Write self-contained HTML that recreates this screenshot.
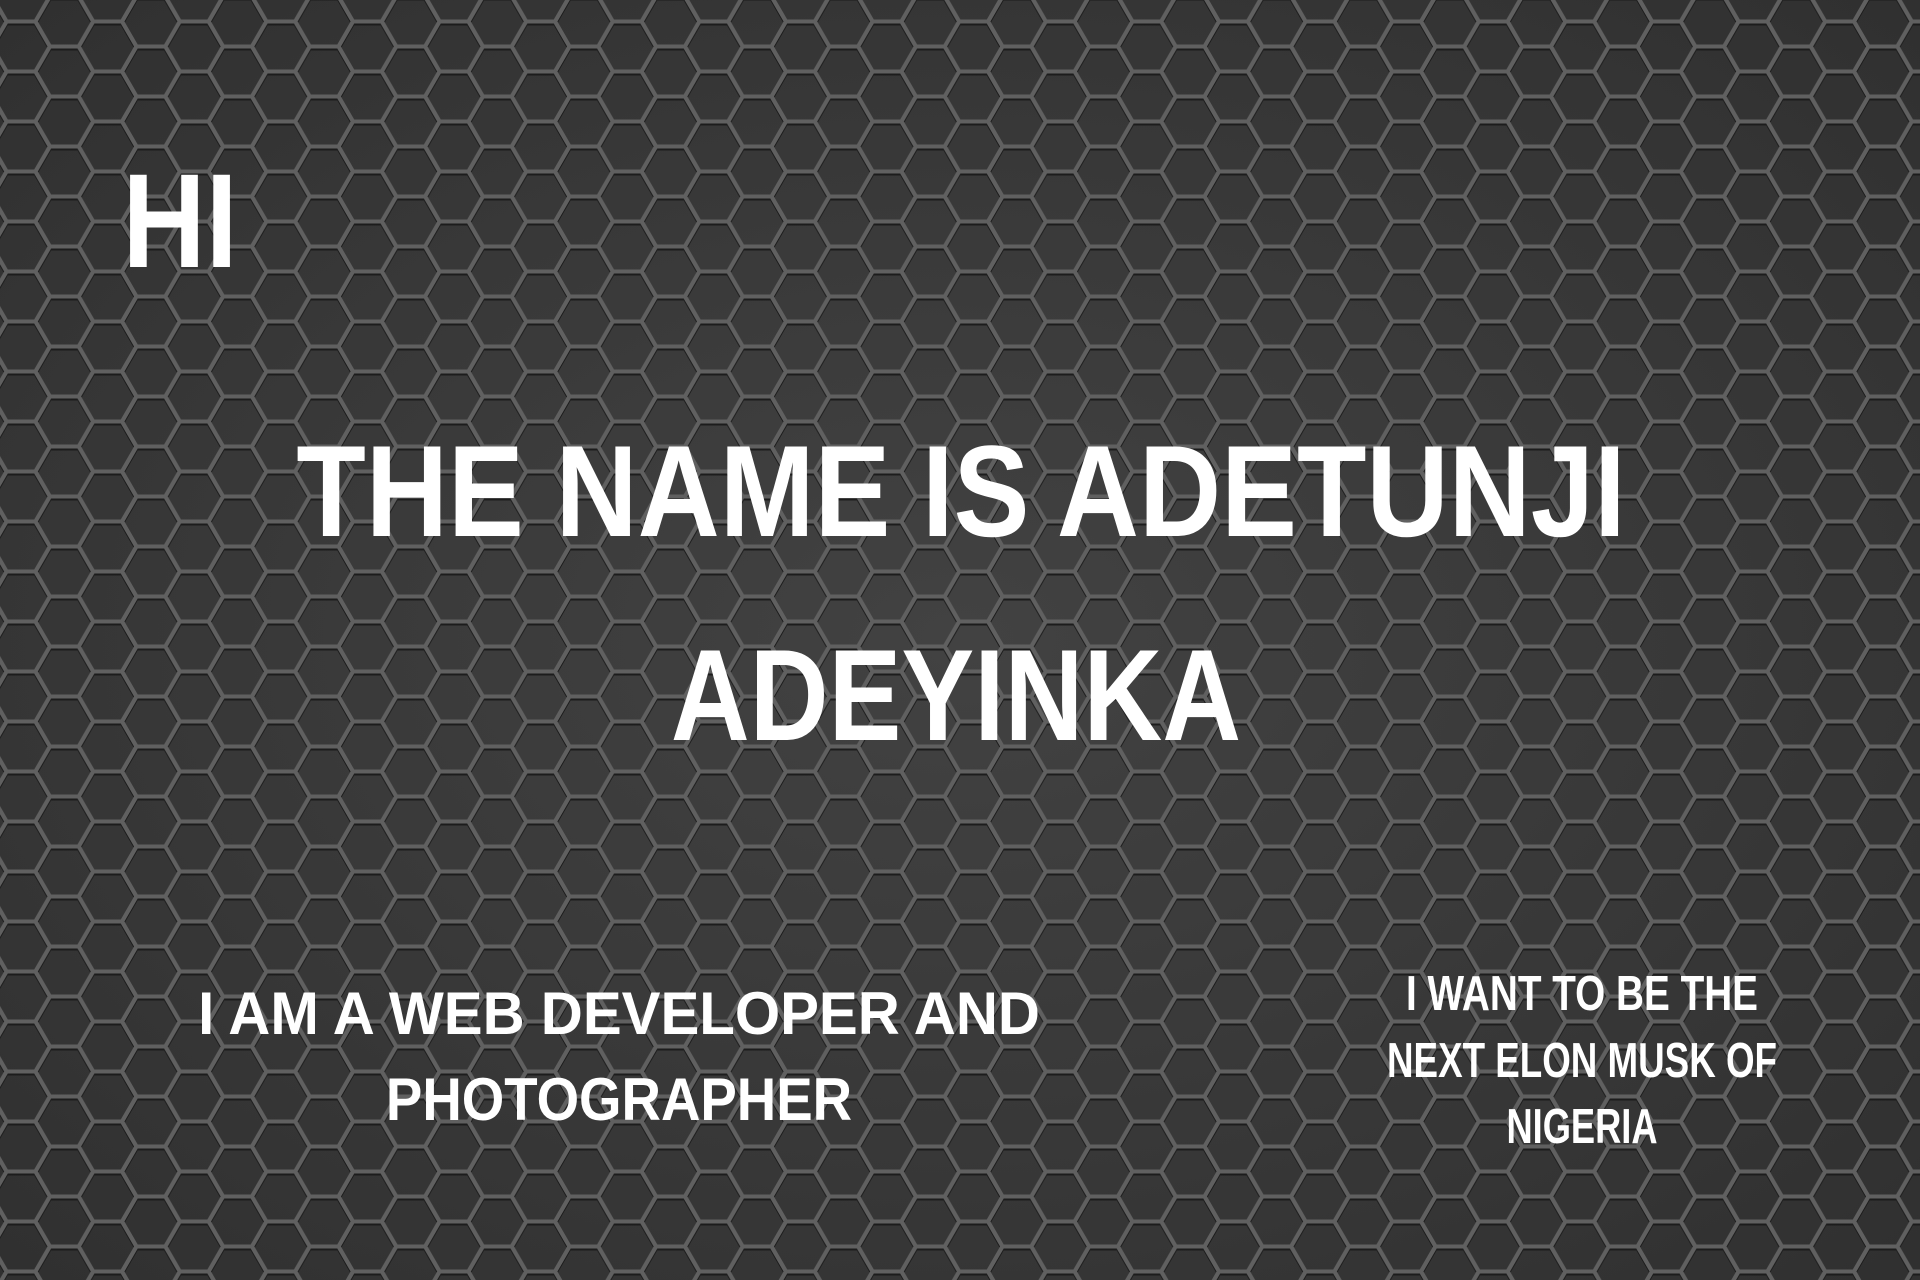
<!DOCTYPE html>
<html><head><meta charset="utf-8"><style>
html,body{margin:0;padding:0;}
body{width:1920px;height:1280px;overflow:hidden;position:relative;background:#353535;font-family:"Liberation Sans",sans-serif;}
svg.bg{position:absolute;left:0;top:0;}
.t{position:absolute;color:#fff;font-weight:bold;line-height:1;white-space:nowrap;transform-origin:center top;}
</style></head><body>
<svg class="bg" width="1920" height="1280" viewBox="0 0 1920 1280">
<defs>
<radialGradient id="rg" cx="50%" cy="50%" r="70%">
<stop offset="0" stop-color="#424242"/><stop offset="1" stop-color="#303030"/>
</radialGradient>
<pattern id="hex" width="86.6" height="50" patternUnits="userSpaceOnUse" patternTransform="translate(21,46.5)">
<g fill="none" stroke="#1c1c1c" stroke-width="4" transform="translate(0,2)">
<polygon points="28.87,0 14.43,25 -14.43,25 -28.87,0 -14.43,-25 14.43,-25"/>
<polygon transform="translate(86.6,0)" points="28.87,0 14.43,25 -14.43,25 -28.87,0 -14.43,-25 14.43,-25"/>
<polygon transform="translate(0,50)" points="28.87,0 14.43,25 -14.43,25 -28.87,0 -14.43,-25 14.43,-25"/>
<polygon transform="translate(86.6,50)" points="28.87,0 14.43,25 -14.43,25 -28.87,0 -14.43,-25 14.43,-25"/>
<polygon transform="translate(43.3,25)" points="28.87,0 14.43,25 -14.43,25 -28.87,0 -14.43,-25 14.43,-25"/>
</g>
<g fill="none" stroke="#606060" stroke-width="4">
<polygon points="28.87,0 14.43,25 -14.43,25 -28.87,0 -14.43,-25 14.43,-25"/>
<polygon transform="translate(86.6,0)" points="28.87,0 14.43,25 -14.43,25 -28.87,0 -14.43,-25 14.43,-25"/>
<polygon transform="translate(0,50)" points="28.87,0 14.43,25 -14.43,25 -28.87,0 -14.43,-25 14.43,-25"/>
<polygon transform="translate(86.6,50)" points="28.87,0 14.43,25 -14.43,25 -28.87,0 -14.43,-25 14.43,-25"/>
<polygon transform="translate(43.3,25)" points="28.87,0 14.43,25 -14.43,25 -28.87,0 -14.43,-25 14.43,-25"/>
</g>
</pattern>
</defs>
<rect width="1920" height="1280" fill="url(#rg)"/>
<rect width="1920" height="1280" fill="url(#hex)"/>
</svg>

<div class="t" style="left:180px;top:155px;font-size:134px;transform:translateX(-50%) scaleX(0.86);">HI</div>
<div class="t" style="left:961px;top:426px;font-size:130px;transform:translateX(-50%) scaleX(0.875);">THE NAME IS ADETUNJI</div>
<div class="t" style="left:956px;top:630px;font-size:130px;transform:translateX(-50%) scaleX(0.84);">ADEYINKA</div>
<div class="t" style="left:619px;top:984px;font-size:60px;transform:translateX(-50%) scaleX(0.97);">I AM A WEB DEVELOPER AND</div>
<div class="t" style="left:619px;top:1070px;font-size:60px;transform:translateX(-50%) scaleX(0.91);">PHOTOGRAPHER</div>
<div class="t" style="left:1582px;top:970px;font-size:49px;transform:translateX(-50%) scaleX(0.79);">I WANT TO BE THE</div>
<div class="t" style="left:1582px;top:1037px;font-size:49px;transform:translateX(-50%) scaleX(0.75);">NEXT ELON MUSK OF</div>
<div class="t" style="left:1582px;top:1103px;font-size:49px;transform:translateX(-50%) scaleX(0.74);">NIGERIA</div>
</body></html>
